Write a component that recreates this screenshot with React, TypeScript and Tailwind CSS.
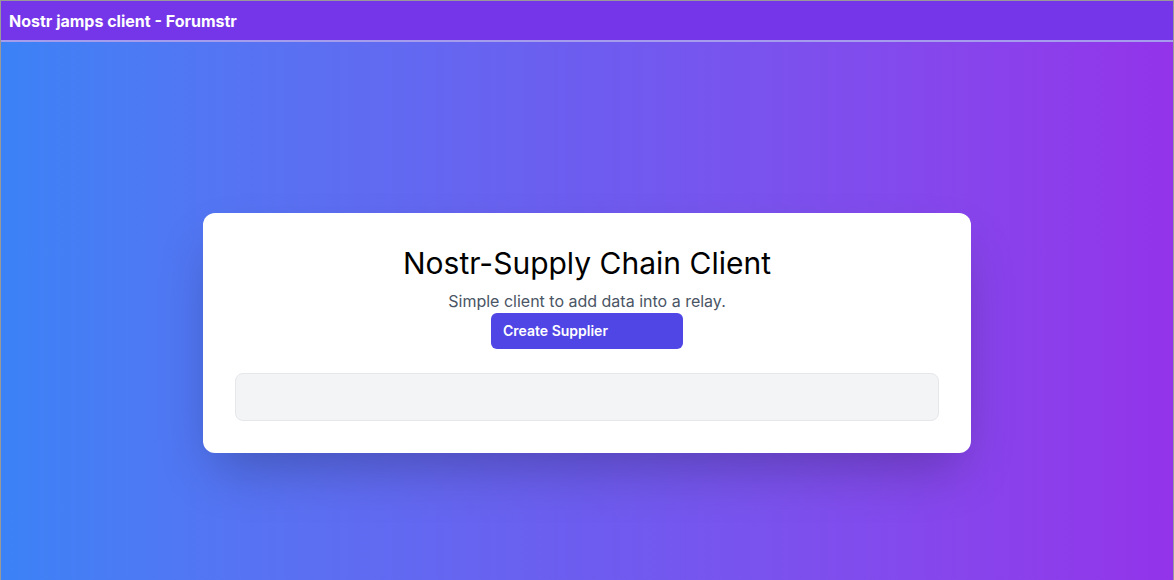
import React from "react";

export default function App() {
  return (
    <div
      className="w-full h-[580px] overflow-hidden border-x border-t border-black/40 flex flex-col"
      style={{ fontFamily: "Inter, 'Noto Sans', sans-serif" }}
    >
      <header className="h-[41px] shrink-0 bg-[#7536e9] border-b-2 border-[#a59cee] flex items-center px-2">
        <h1 className="text-white font-bold text-base">Nostr jamps client - Forumstr</h1>
      </header>
      <main className="h-[580px] shrink-0 bg-gradient-to-r from-[#3b82f6] via-[#6d5cef] to-[#9333ea] flex items-center justify-center pt-[2px]">
        <div className="w-[768px] bg-white rounded-xl shadow-2xl p-8 flex flex-col items-center">
          <h2 className="text-3xl text-black font-normal">Nostr-Supply Chain Client</h2>
          <p className="mt-2 text-base text-gray-600">Simple client to add data into a relay.</p>
          <button className="w-48 h-9 bg-[#4f46e5] rounded-md text-white text-sm font-semibold text-left px-3">
            Create Supplier
          </button>
          <div className="mt-6 w-full h-12 bg-gray-100 border border-gray-200 rounded-lg"></div>
        </div>
      </main>
    </div>
  );
}
